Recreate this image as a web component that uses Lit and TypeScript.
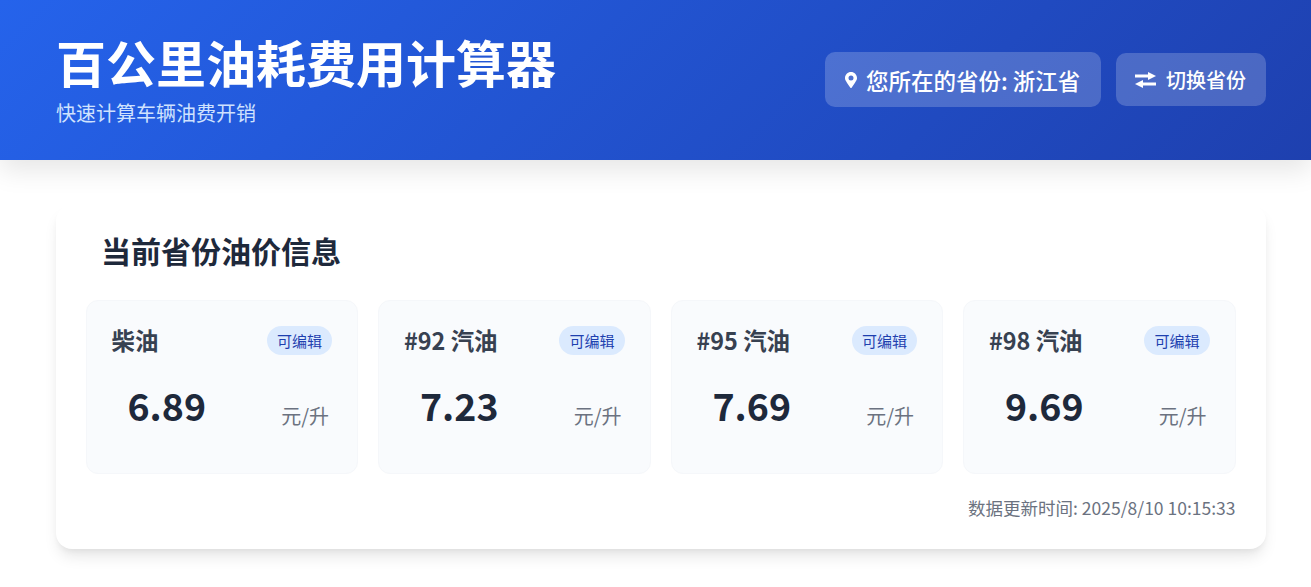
import { LitElement, html, css, svg } from "lit";
import { customElement } from "lit/decorators.js";

const tiles = [
  { name: "柴油", price: "6.89" },
  { name: "#92 汽油", price: "7.23" },
  { name: "#95 汽油", price: "7.69" },
  { name: "#98 汽油", price: "9.69" },
];

@customElement("app-root")
export class AppRoot extends LitElement {
  static styles = css`
    :host {
      display: block;
      min-height: 587px;
      background: #fff;
      font-family: "Noto Sans CJK SC", "Noto Sans", sans-serif;
      overflow: hidden;
    }
    * { box-sizing: border-box; }
    .header {
      height: 160px;
      padding: 0 45px 0 56px;
      background: linear-gradient(135deg, #2563eb, #1e40af);
      box-shadow: 0 10px 25px rgba(0, 0, 0, 0.1);
      display: flex;
      align-items: center;
      justify-content: space-between;
      color: #fff;
    }
    .brand { display: flex; flex-direction: column; margin-top: -3px; }
    h1 { margin: 0; font-size: 50px; line-height: 60px; font-weight: 700; }
    .sub { font-size: 20px; line-height: 28px; color: #cfe2fe; margin-top: 8px; }
    .actions { display: flex; align-items: center; gap: 15px; margin-top: -1px; }
    .pill, .btn {
      display: flex;
      align-items: center;
      background: rgba(255, 255, 255, 0.2);
      border-radius: 10px;
      color: #fff;
      font-weight: 500;
    }
    .pill { height: 55px; width: 276px; padding-left: 20px; font-size: 22.5px; gap: 9px; }
    .btn { height: 53px; width: 150px; padding-left: 19px; font-size: 20px; gap: 10px; }
    .main { padding: 45px 45.5px 0 55.5px; }
    .panel {
      background: #fff;
      border-radius: 16px;
      box-shadow: 0 10px 15px -3px rgba(0, 0, 0, 0.1), 0 4px 6px -2px rgba(0, 0, 0, 0.05);
      padding: 30px 30px 28px;
      height: 344px;
    }
    h2 {
      margin: -4px 0 31px 15.5px;
      font-size: 30px;
      line-height: 38px;
      font-weight: 700;
      color: #1e293b;
    }
    .grid { display: grid; grid-template-columns: repeat(4, 1fr); gap: 20px; }
    .tile {
      height: 174px;
      background: #f9fbfd;
      border: 1px solid #f5f7fa;
      border-radius: 12px;
      padding: 24px 25px 0;
    }
    .top { display: flex; justify-content: space-between; align-items: center; height: 30px; }
    .name { font-size: 23.4px; font-weight: 700; color: #374151; }
    .badge {
      font-size: 15px;
      line-height: 29px;
      height: 29px;
      padding: 0 10px;
      border-radius: 15px;
      background: #dbeafe;
      color: #1e40af;
    }
    .bottom { display: flex; justify-content: space-between; margin-top: 22px; padding: 0 3px 0 16px; }
    .price { font-size: 37.5px; line-height: 56px; font-weight: 700; color: #1e293b; }
    .unit { font-size: 20px; line-height: 28px; color: #6b7280; margin-top: 25px; }
    .stamp { text-align: right; margin-top: 21px; font-size: 17.5px; line-height: 26px; color: #6b7280; }
  `;

  private pin() {
    return svg`<svg width="12" height="18" viewBox="0 0 384 512" fill="#fff"><path d="M172.3 501.7C27 291 0 256 0 192 0 86 86 0 192 0s192 86 192 192c0 64-27 99-172.3 309.7a24 24 0 0 1-39.4 0zM192 272a80 80 0 1 0 0-160 80 80 0 0 0 0 160z"/></svg>`;
  }

  private swap() {
    return svg`<svg width="21" height="16" viewBox="0 0 21 16" fill="#fff"><path d="M0 2.6h13V0l8 4-8 4V5.6H0z"/><path d="M21 10.4H8V8l-8 4 8 4v-2.6h13z"/></svg>`;
  }

  render() {
    return html`
      <header class="header">
        <div class="brand">
          <h1>百公里油耗费用计算器</h1>
          <div class="sub">快速计算车辆油费开销</div>
        </div>
        <div class="actions">
          <div class="pill">${this.pin()}<span>您所在的省份: 浙江省</span></div>
          <div class="btn">${this.swap()}<span>切换省份</span></div>
        </div>
      </header>
      <main class="main">
        <section class="panel">
          <h2>当前省份油价信息</h2>
          <div class="grid">
            ${tiles.map(
              (t) => html`
                <div class="tile">
                  <div class="top">
                    <span class="name">${t.name}</span>
                    <span class="badge">可编辑</span>
                  </div>
                  <div class="bottom">
                    <span class="price">${t.price}</span>
                    <span class="unit">元/升</span>
                  </div>
                </div>
              `
            )}
          </div>
          <div class="stamp">数据更新时间: 2025/8/10 10:15:33</div>
        </section>
      </main>
    `;
  }
}
